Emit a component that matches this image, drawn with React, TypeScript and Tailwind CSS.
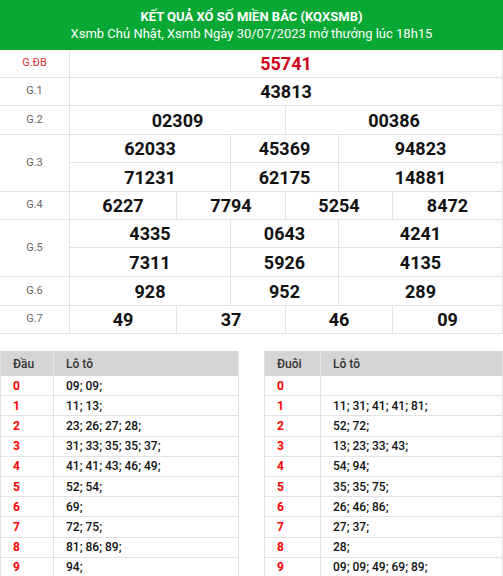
const g3 = [["62033", "45369", "94823"], ["71231", "62175", "14881"]];
const g5 = [["4335", "0643", "4241"], ["7311", "5926", "4135"]];

const dau = ["09; 09;", "11; 13;", "23; 26; 27; 28;", "31; 33; 35; 35; 37;", "41; 41; 43; 46; 49;", "52; 54;", "69;", "72; 75;", "81; 86; 89;", "94;"];
const duoi = ["", "11; 31; 41; 41; 81;", "52; 72;", "13; 23; 33; 43;", "54; 94;", "35; 35; 75;", "26; 46; 86;", "27; 37;", "28;", "09; 09; 49; 69; 89;"];

const Cell = ({ children, last, red }: { children: React.ReactNode; last?: boolean; red?: boolean }) => (
  <div className={`flex items-center justify-center text-[18px] font-bold ${red ? "text-[#d0021b]" : "text-[#111]"} ${last ? "" : "border-r border-[#e2e2e2]"}`}>
    {children}
  </div>
);

const Label = ({ text, red }: { text: string; red?: boolean }) => (
  <div className={`w-[70px] shrink-0 flex items-center justify-center border-r border-[#e2e2e2] text-[11px] ${red ? "text-[#e0303a]" : "text-[#666]"}`}>
    {text}
  </div>
);

const ThreeCols = ({ rows }: { rows: string[][] }) => (
  <div className="flex-1 flex flex-col">
    {rows.map((r, i) => (
      <div key={i} className={`grid grid-cols-[161px_108px_1fr] h-[28px] ${i === 0 ? "border-b border-[#e2e2e2]" : ""}`}>
        {r.map((n, j) => (
          <Cell key={j} last={j === 2}>{n}</Cell>
        ))}
      </div>
    ))}
  </div>
);

const LotoTable = ({ head, rows, firstW }: { head: string; rows: string[]; firstW: string }) => (
  <div className="flex-1 border-r border-l border-[#e2e2e2] text-[12px]">
    <div className="flex h-[25px] bg-[#d5d5d5] text-[#333] font-medium">
      <div className={`${firstW} shrink-0 pl-3 flex items-center border-r border-[#e6e6e6]`}>{head}</div>
      <div className="flex-1 pl-3 flex items-center">Lô tô</div>
    </div>
    {rows.map((r, i) => (
      <div key={i} className="flex h-[20.2px] border-b border-[#e2e2e2]">
        <div className={`${firstW} shrink-0 pl-3 flex items-center border-r border-[#e2e2e2] text-[#f00] font-bold`}>{i}</div>
        <div className="flex-1 pl-3 flex items-center text-[#111] font-medium">{r}</div>
      </div>
    ))}
  </div>
);

export default function App() {
  return (
    <div className="w-[503px] h-[576px] overflow-hidden bg-white font-['Roboto',sans-serif]">
      <div className="h-[50px] bg-[#08a834] text-white flex flex-col items-center justify-center">
        <div className="text-[13px] font-bold leading-[17px]">KẾT QUẢ XỔ SỐ MIỀN BẮC (KQXSMB)</div>
        <div className="text-[13px] leading-[17px]">Xsmb Chủ Nhật, Xsmb Ngày 30/07/2023 mở thưởng lúc 18h15</div>
      </div>
      <div className="border-r border-[#e2e2e2]">
        <div className="flex h-[28px] border-b border-[#e2e2e2]">
          <Label text="G.ĐB" red />
          <div className="flex-1 grid grid-cols-1"><Cell last red>55741</Cell></div>
        </div>
        <div className="flex h-[28px] border-b border-[#e2e2e2]">
          <Label text="G.1" />
          <div className="flex-1 grid grid-cols-1"><Cell last>43813</Cell></div>
        </div>
        <div className="flex h-[29px] border-b border-[#e2e2e2]">
          <Label text="G.2" />
          <div className="flex-1 grid grid-cols-2"><Cell>02309</Cell><Cell last>00386</Cell></div>
        </div>
        <div className="flex border-b border-[#e2e2e2]">
          <Label text="G.3" />
          <ThreeCols rows={g3} />
        </div>
        <div className="flex h-[28px] border-b border-[#e2e2e2]">
          <Label text="G.4" />
          <div className="flex-1 grid grid-cols-[107px_109px_107px_1fr]">
            <Cell>6227</Cell><Cell>7794</Cell><Cell>5254</Cell><Cell last>8472</Cell>
          </div>
        </div>
        <div className="flex border-b border-[#e2e2e2]">
          <Label text="G.5" />
          <ThreeCols rows={g5} />
        </div>
        <div className="flex h-[29px] border-b border-[#e2e2e2]">
          <Label text="G.6" />
          <div className="flex-1 grid grid-cols-[161px_108px_1fr]">
            <Cell>928</Cell><Cell>952</Cell><Cell last>289</Cell>
          </div>
        </div>
        <div className="flex h-[28px] border-b border-[#e2e2e2]">
          <Label text="G.7" />
          <div className="flex-1 grid grid-cols-[107px_109px_107px_1fr]">
            <Cell>49</Cell><Cell>37</Cell><Cell>46</Cell><Cell last>09</Cell>
          </div>
        </div>
      </div>
      <div className="flex gap-[25px] mt-[17px]">
        <LotoTable head="Đầu" rows={dau} firstW="w-[53px]" />
        <LotoTable head="Đuôi" rows={duoi} firstW="w-[56px]" />
      </div>
    </div>
  );
}
